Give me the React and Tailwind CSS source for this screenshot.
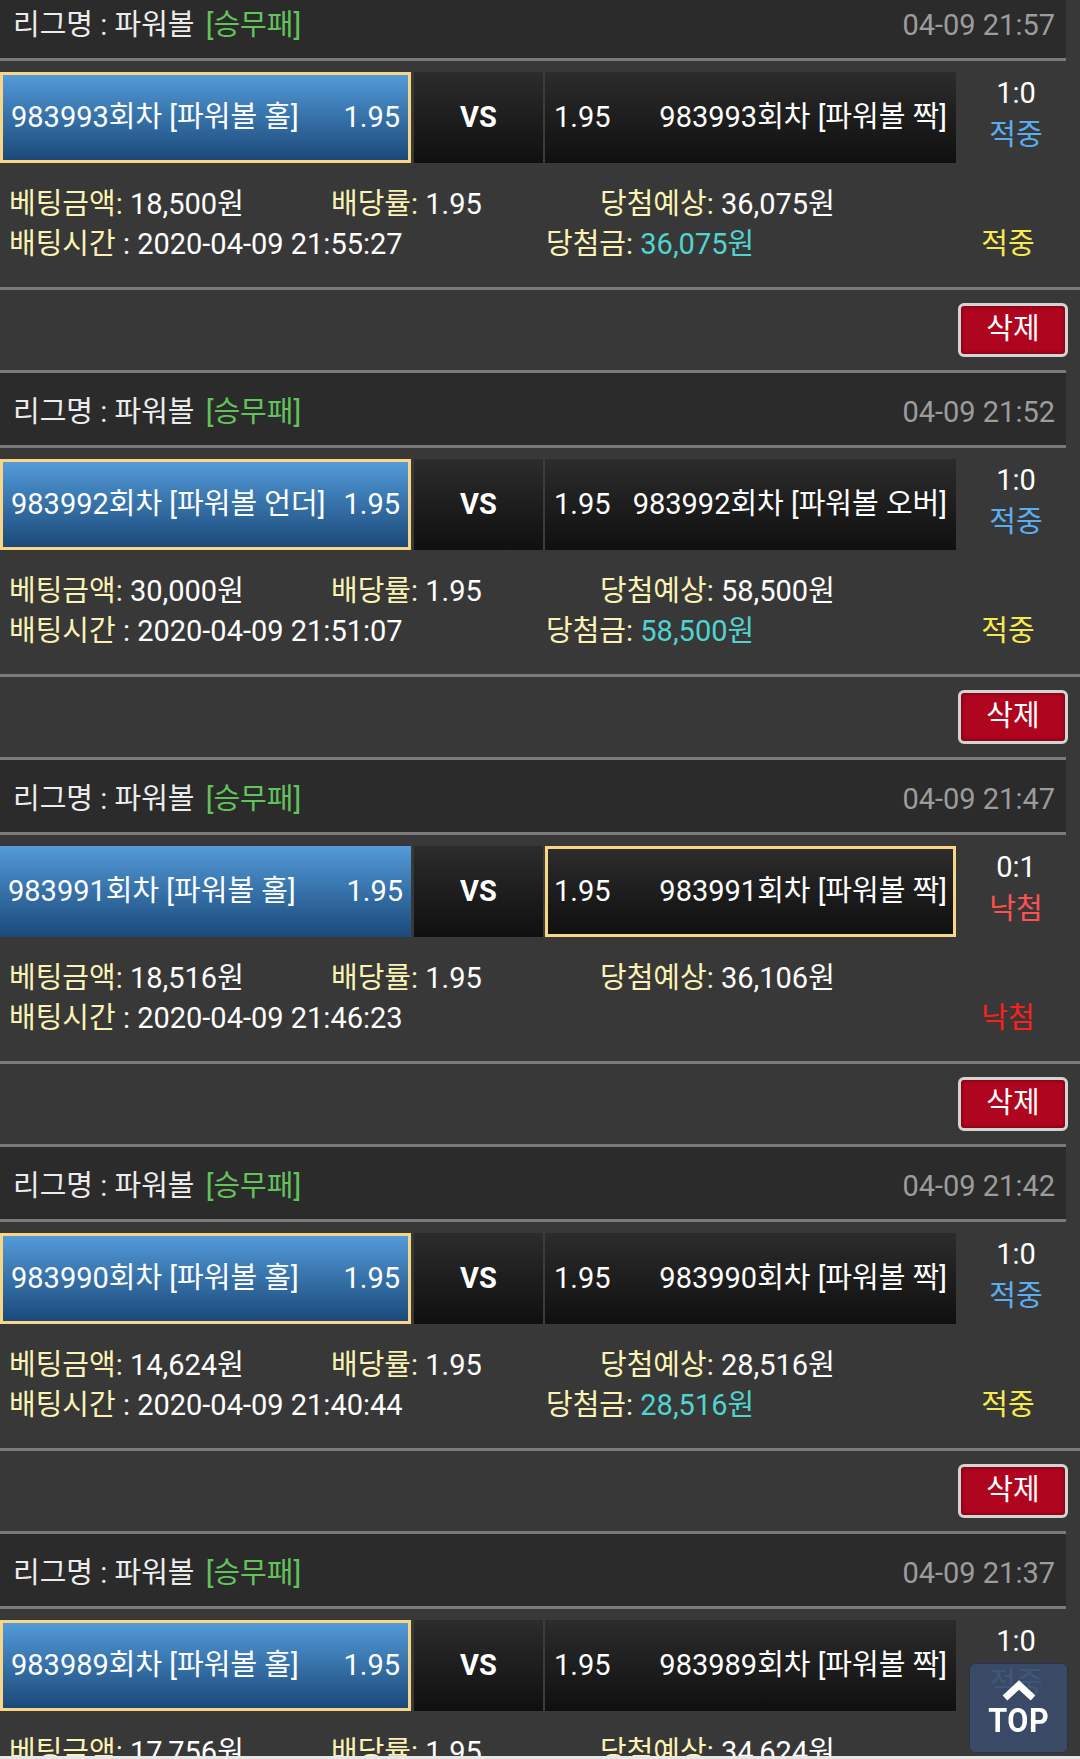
import React from 'react';

const bets = [
  { time: '21:57', round: '983993', left: '홀', right: '짝', pick: 'left', score: '1:0', win: true, amount: '18,500', expect: '36,075', at: '2020-04-09 21:55:27' },
  { time: '21:52', round: '983992', left: '언더', right: '오버', pick: 'left', score: '1:0', win: true, amount: '30,000', expect: '58,500', at: '2020-04-09 21:51:07' },
  { time: '21:47', round: '983991', left: '홀', right: '짝', pick: 'right', score: '0:1', win: false, amount: '18,516', expect: '36,106', at: '2020-04-09 21:46:23' },
  { time: '21:42', round: '983990', left: '홀', right: '짝', pick: 'left', score: '1:0', win: true, amount: '14,624', expect: '28,516', at: '2020-04-09 21:40:44' },
  { time: '21:37', round: '983989', left: '홀', right: '짝', pick: 'left', score: '1:0', win: true, amount: '17,756', expect: '34,624', at: '2020-04-09 21:35:12' },
];

const BetCard = ({ b }) => {
  const leftPicked = b.pick === 'left';
  return (
    <div className="h-[387px]">
      {/* header */}
      <div className="w-[1066px] h-[78px] border-y-[3px] border-[#7a7a7a] bg-[#2b2b2b] flex items-center justify-between pl-[13px] pr-[11px] pt-[8px]">
        <span className="text-[#ececec]">
          리그명 : 파워볼 <span className="ml-[4px] text-[#62c35b]">[승무패]</span>
        </span>
        <span className="text-[#9c9c9c]">04-09 {b.time}</span>
      </div>

      {/* match row */}
      <div className="mt-[11px] h-[91px] flex">
        <div
          className={`w-[411px] flex items-center justify-between bg-gradient-to-b from-[#539bda] to-[#1b4a7a] text-white px-[8px] ${
            leftPicked ? 'border-[3px] border-[#f8d685]' : ''
          }`}
        >
          <span>{b.round}회차 [파워볼 {b.left}]</span>
          <span>1.95</span>
        </div>
        <div className="ml-[3px] w-[129px] flex items-center justify-center bg-gradient-to-b from-[#2c2c2c] to-[#101010] text-white font-bold">
          VS
        </div>
        <div className="w-[2px] bg-[#3c3c3c]" />
        <div
          className={`w-[411px] flex items-center justify-between bg-gradient-to-b from-[#2c2c2c] to-[#101010] text-white ${
            leftPicked ? 'px-[9px]' : 'border-[3px] border-[#f8d685] px-[6px]'
          }`}
        >
          <span>1.95</span>
          <span>{b.round}회차 [파워볼 {b.right}]</span>
        </div>
        <div className="flex-1 flex flex-col items-center pr-[4px] leading-[42px]">
          <span className="text-white">{b.score}</span>
          <span className={b.win ? 'text-[#5aaef0]' : 'text-[#ff5050]'}>{b.win ? '적중' : '낙첨'}</span>
        </div>
      </div>

      {/* info */}
      <div className="pt-[21px] pb-[23px] px-[9px] leading-[40px]">
        <div className="flex">
          <span className="w-[322px]">
            <span className="text-[#fbf3b4]">베팅금액:</span> <span className="text-white">{b.amount}원</span>
          </span>
          <span className="w-[269px]">
            <span className="text-[#fbf3b4]">배당률:</span> <span className="text-white">1.95</span>
          </span>
          <span>
            <span className="text-[#fbf3b4]">당첨예상:</span> <span className="text-white">{b.expect}원</span>
          </span>
        </div>
        <div className="flex pr-[13px]">
          <span className="w-[537px]">
            <span className="text-[#fbf3b4]">배팅시간</span> <span className="text-white">: {b.at}</span>
          </span>
          <span className="flex-1">
            {b.win && (
              <>
                <span className="text-[#fbf3b4]">당첨금:</span> <span className="text-[#4fd4d0]">{b.expect}원</span>
              </>
            )}
          </span>
          <span className={`w-[100px] text-center ${b.win ? 'text-[#f7ea4c]' : 'text-[#ff1e1e]'}`}>
            {b.win ? '적중' : '낙첨'}
          </span>
        </div>
      </div>

      <div className="h-[3px] bg-[#7a7a7a]" />

      <div className="flex justify-end pr-[12px] pt-[13px]">
        <button className="w-[110px] h-[54px] rounded-[6px] border-[3px] border-[#d4d4d4] bg-[#b0051e] text-white shadow-[inset_0_0_4px_rgba(0,0,0,0.5)]">
          삭제
        </button>
      </div>
    </div>
  );
};

export default function App() {
  return (
    <div
      className="relative w-[1080px] h-[1759px] overflow-hidden bg-[#383838] text-[29px]"
      style={{ fontFamily: 'Roboto, "Noto Sans CJK KR", sans-serif' }}
    >
      <div className="-mt-[17px]">
        {bets.map((b) => (
          <BetCard key={b.round} b={b} />
        ))}
      </div>

      <button className="fixed right-[12px] bottom-[6px] w-[99px] h-[90px] rounded-[6px] border border-[#28324a] bg-[#3b4c6b]/[0.9] flex flex-col items-center justify-center text-white">
        <svg width="36" height="22" viewBox="0 0 36 22" className="mb-[1px]">
          <path d="M4 19 L18 6 L32 19" fill="none" stroke="white" strokeWidth="7" strokeLinejoin="miter" />
        </svg>
        <span className="font-bold text-[34px] leading-[36px] tracking-[0.5px] scale-x-90">TOP</span>
      </button>
      <div className="fixed left-0 bottom-0 w-full h-[3px] bg-[#e6e6e6]" />
    </div>
  );
}
